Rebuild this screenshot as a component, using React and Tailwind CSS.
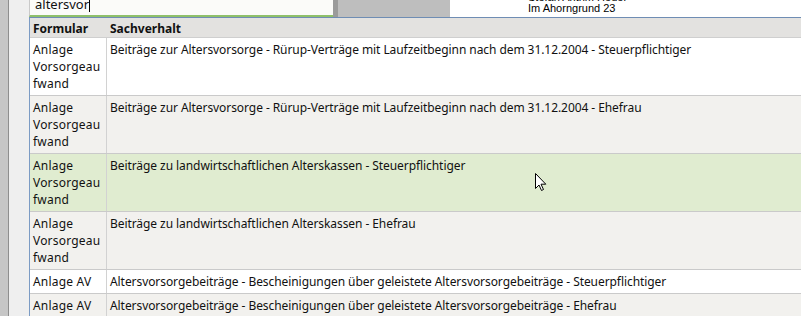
import React from "react";

const rows = [
  { f: ["Anlage", "Vorsorgeau", "fwand"], s: "Beiträge zur Altersvorsorge - Rürup-Verträge mit Laufzeitbeginn nach dem 31.12.2004 - Steuerpflichtiger", bg: "bg-white" },
  { f: ["Anlage", "Vorsorgeau", "fwand"], s: "Beiträge zur Altersvorsorge - Rürup-Verträge mit Laufzeitbeginn nach dem 31.12.2004 - Ehefrau", bg: "bg-[#f2f1ee]" },
  { f: ["Anlage", "Vorsorgeau", "fwand"], s: "Beiträge zu landwirtschaftlichen Alterskassen - Steuerpflichtiger", bg: "bg-[#e0ecd0]" },
  { f: ["Anlage", "Vorsorgeau", "fwand"], s: "Beiträge zu landwirtschaftlichen Alterskassen - Ehefrau", bg: "bg-[#f2f1ee]" },
  { f: ["Anlage AV"], s: "Altersvorsorgebeiträge - Bescheinigungen über geleistete Altersvorsorgebeiträge - Steuerpflichtiger", bg: "bg-white" },
  { f: ["Anlage AV"], s: "Altersvorsorgebeiträge - Bescheinigungen über geleistete Altersvorsorgebeiträge - Ehefrau", bg: "bg-[#f2f1ee]" },
];

export default function App() {
  return (
    <div className="relative w-[801px] h-[316px] overflow-hidden flex bg-white text-[#111]" style={{ fontFamily: '"Noto Sans", "Open Sans", sans-serif' }}>
      <div className="w-[9px] bg-[#c6c6c6] border-r border-[#8e8e8e]" />
      <div className="w-[20px] bg-[#efefef]" />
      <div className="flex-1 flex flex-col min-w-0">
        <div className="h-[17px] flex shrink-0">
          <div className="w-[304px] bg-[#fbfbf9] border-b-2 border-[#8fc06a] border-l border-l-[#c9c9c9] pl-[5px] text-[13px] leading-[13px] overflow-hidden flex items-start">
            <span className="-mt-[2px]">altersvor</span>
            <span className="w-px h-[13px] bg-black -mt-[1px]" />
          </div>
          <div className="w-[5px] bg-[#9b9b9b]" />
          <div className="w-[112px] bg-[#bebebe]" />
          <div className="flex-1 bg-white relative overflow-hidden" style={{ fontFamily: '"Liberation Sans", Arial, sans-serif' }}>
            <div className="absolute left-[78px] -top-[9px] text-[11px] leading-[12px] text-black">Stefan Antrim Heuer</div>
            <div className="absolute left-[78px] top-[2px] text-[11px] leading-[12px] text-black">Im Ahorngrund 23</div>
          </div>
        </div>
        <div className="flex-1 border-t border-t-[#6f8db4] border-l border-l-[#7b9bc4] text-[12px] leading-[17px]">
          <div className="flex h-[20px] bg-[#e3e2e0] border-b border-[#cfcfcf] font-bold">
            <div className="w-[77px] pl-[3px] pt-[2px]">Formular</div>
            <div className="flex-1 pl-[3px] pt-[2px]">Sachverhalt</div>
          </div>
          {rows.map((r, i) => (
            <div key={i} className={`flex border-b border-[#cacaca] ${r.bg}`}>
              <div className="w-[77px] shrink-0 border-r border-[#d2d2d2] pl-[3px] py-[3px] tracking-[0.2px]">
                {r.f.map((t, j) => (
                  <div key={j}>{t}</div>
                ))}
              </div>
              <div className="flex-1 pl-[3px] py-[3px] whitespace-nowrap tracking-[-0.07px]">{r.s}</div>
            </div>
          ))}
        </div>
      </div>
      <svg className="absolute left-[535px] top-[173px]" width="12" height="19" viewBox="0 0 12 19">
        <path d="M0.5 0.5 L0.5 15.5 L4 12 L6.5 17.5 L8.5 16.5 L6 11.2 L10.8 11.2 Z" fill="#ffffff" stroke="#000" strokeWidth="1" strokeLinejoin="miter" />
      </svg>
    </div>
  );
}
